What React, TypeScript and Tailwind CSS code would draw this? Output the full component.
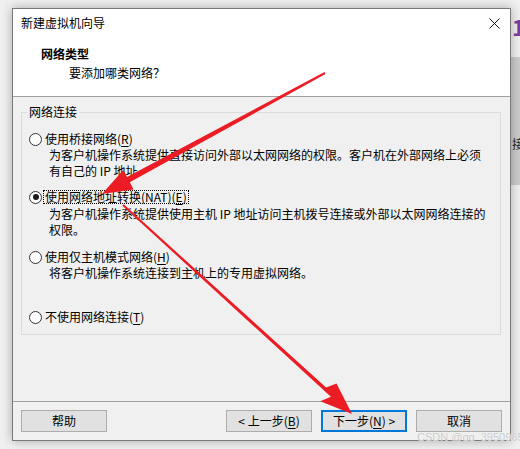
import React from "react";

function Radio({ checked }: { checked?: boolean }) {
  return (
    <span className="w-[13px] h-[13px] shrink-0 rounded-full border border-[#333333] bg-white flex items-center justify-center">
      {checked && <span className="w-[6px] h-[6px] rounded-full bg-[#1a1a1a]" />}
    </span>
  );
}

function Key({ k }: { k: string }) {
  return (
    <>
      (<span className="underline underline-offset-2">{k}</span>)
    </>
  );
}

function Button({ children, primary }: { children: React.ReactNode; primary?: boolean }) {
  return (
    <button
      className={
        primary
          ? "w-[86px] h-[22px] bg-[#e1e1e1] border-2 border-[#0078d7] text-[12px] leading-[16px] text-black flex items-center justify-center"
          : "w-[86px] h-[22px] bg-[#e1e1e1] border border-[#adadad] text-[12px] leading-[16px] text-black flex items-center justify-center"
      }
    >
      {children}
    </button>
  );
}

export default function App() {
  return (
    <div className="relative w-[520px] h-[449px] overflow-hidden bg-[#f0f0f0] font-['Noto_Sans_CJK_SC',sans-serif] text-black">
      {/* window behind, on the right */}
      <div className="absolute left-[511px] top-[57px] w-[9px] h-[128px] bg-[#cbcbcb]" />
      <span className="absolute left-[512px] top-[12px] text-[22px] leading-[28px] font-bold text-[#7b3fa8]">1</span>
      <span className="absolute left-[512px] top-[136px] text-[12px] leading-[16px] text-[#222]">接</span>

      {/* dialog */}
      <div className="absolute left-[12px] top-[8px] w-[499px] h-[433px] border border-[#7a7a7a] bg-[#f0f0f0] shadow-[0_0_10px_rgba(0,0,0,0.3)] flex flex-col">
        <div className="h-[87px] bg-white flex flex-col">
          <div className="h-[28px] flex items-center justify-between pl-[8px] pr-[10px]">
            <span className="text-[12px] leading-[16px]">新建虚拟机向导</span>
            <svg width="11" height="11" viewBox="0 0 11 11">
              <path d="M0.5 0.5 L10.5 10.5 M10.5 0.5 L0.5 10.5" stroke="#111" strokeWidth="1" />
            </svg>
          </div>
          <div className="pl-[28px] mt-[9px] text-[12px] leading-[16px] font-bold">网络类型</div>
          <div className="pl-[56px] mt-[3px] text-[12px] leading-[16px]">要添加哪类网络？</div>
        </div>
        <div className="h-px bg-[#a0a0a0]" />

        <div className="h-[304px] pt-[7px] pl-[8px] pr-[9px]">
          <fieldset className="border border-[#dcdcdc] pb-[9px] text-[12px]">
            <legend className="ml-[5px] px-[2px] leading-[16px]">网络连接</legend>
            <div className="pl-[7px] mt-[11px] flex items-center gap-[3px] h-[16px]">
              <Radio />
              <span className="leading-[16px]">
                使用桥接网络<Key k="R" />
              </span>
            </div>
            <div className="pl-[27px] pr-[12px] leading-[16px]">
              为客户机操作系统提供直接访问外部以太网网络的权限。客户机在外部网络上必须
              <br />
              有自己的 IP 地址
            </div>

            <div className="pl-[7px] mt-[10px] flex items-center gap-[1px] h-[16px]">
              <Radio checked />
              <span className="leading-[12px] border border-dotted border-black px-[1px]">
                使用网络地址转换(NAT)<Key k="E" />
              </span>
            </div>
            <div className="pl-[27px] pr-[12px] mt-px leading-[16px]">
              为客户机操作系统提供使用主机 IP 地址访问主机拨号连接或外部以太网网络连接的
              <br />
              权限。
            </div>

            <div className="pl-[7px] mt-[11px] flex items-center gap-[3px] h-[16px]">
              <Radio />
              <span className="leading-[16px]">
                使用仅主机模式网络<Key k="H" />
              </span>
            </div>
            <div className="pl-[27px] leading-[16px]">将客户机操作系统连接到主机上的专用虚拟网络。</div>

            <div className="pl-[7px] mt-[28px] flex items-center gap-[3px] h-[16px]">
              <Radio />
              <span className="leading-[16px]">
                不使用网络连接<Key k="T" />
              </span>
            </div>
          </fieldset>
        </div>
        <div className="h-px bg-[#a0a0a0]" />

        <div className="flex-1 flex items-start pt-[8px] px-[8px]">
          <Button>帮助</Button>
          <div className="flex-1" />
          <div className="flex gap-[9px]">
            <Button>
              &lt; 上一步<Key k="B" />
            </Button>
            <Button primary>
              下一步<Key k="N" /> &gt;
            </Button>
            <Button>取消</Button>
          </div>
        </div>
      </div>

      {/* red annotation arrows */}
      <svg className="absolute left-0 top-0 pointer-events-none" width="520" height="449" viewBox="0 0 520 449">
        <polygon
          points="325.5,73.9 129.8,182.3 133.6,189.4 102,194 123.2,170 127,177.1 324.5,72.1"
          fill="#ec1c24"
        />
        <polygon
          points="122.3,205.7 330.9,396.8 320.3,401.3 352,414 336.5,383.5 326.1,387.6 123.7,204.3"
          fill="#ec1c24"
        />
      </svg>

      <span className="absolute left-[417px] top-[431px] whitespace-nowrap text-[11px] leading-[13px] font-['Liberation_Sans',sans-serif] text-[#c9c9c9] [text-shadow:0_0_1px_#fff]">
        CSDN @qq_39509651
      </span>
    </div>
  );
}
